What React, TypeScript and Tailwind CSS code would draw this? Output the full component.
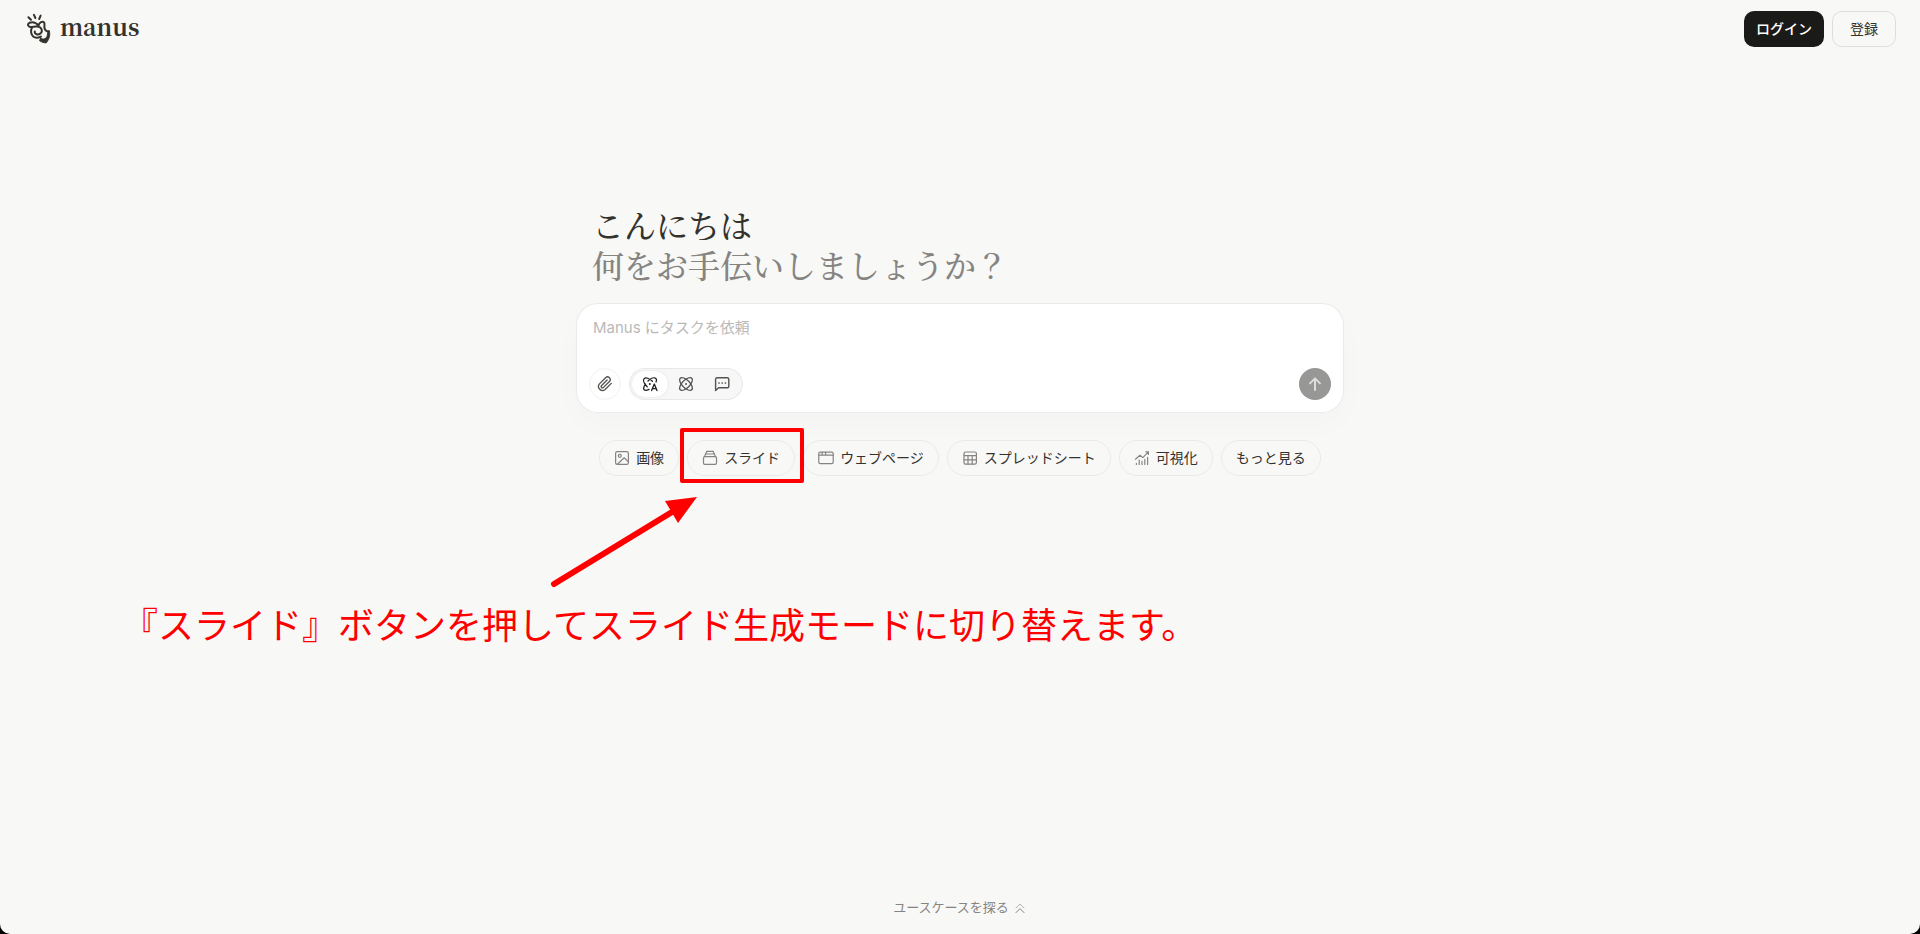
import type { ReactNode } from 'react'

export default function App() {
  return (
    <div className="min-h-screen bg-black font-['Inter','Noto_Sans_CJK_JP',sans-serif]">
      <div className="flex min-h-screen flex-col rounded-b-[10px] bg-[#f8f8f7] text-[#34322d]">
        <Header />

        <main className="flex grow flex-col pt-[146px]">
          <div className="mx-auto w-full max-w-[768px]">
            <h1 className="px-4 font-['Noto_Serif_CJK_JP','Noto_Sans_CJK_JP',serif] text-[32px] leading-10 font-medium">
              <span className="block">こんにちは</span>
              <span className="block text-[#858481]">何をお手伝いしましょうか？</span>
            </h1>
            <PromptBox />
            <Suggestions />
          </div>

          <p className="mt-[121px] pl-[122px] font-['Noto_Sans_CJK_JP',sans-serif] text-[36px] leading-[52px] text-[#ff0000]">
            『スライド』ボタンを押してスライド生成モードに切り替えます。
          </p>
        </main>

        <footer className="flex justify-center pb-[14px]">
          <button type="button" className="flex h-6 items-center gap-1 text-[13px] text-[#858481]">
            ユースケースを探る
            <ChevronsUpIcon />
          </button>
        </footer>
      </div>
    </div>
  )
}

function Header() {
  return (
    <header className="flex h-[58px] items-center justify-between px-6">
      <a href="#" className="flex items-center gap-2 text-[#34322d]">
        <LogoIcon />
        <span className="pb-1 font-['Noto_Serif_CJK_JP','Liberation_Serif',serif] text-[23px] leading-7 font-bold">
          manus
        </span>
      </a>
      <nav className="flex items-center gap-2 text-sm">
        <button type="button" className="h-9 rounded-[10px] bg-[#1a1a19] px-3 font-medium text-white">
          ログイン
        </button>
        <button type="button" className="h-9 w-16 rounded-[10px] border border-black/10">
          登録
        </button>
      </nav>
    </header>
  )
}

function PromptBox() {
  return (
    <form className="mt-[19px] rounded-[22px] border border-black/8 bg-white shadow-[0_12px_32px_rgba(0,0,0,0.02)]">
      <textarea
        aria-label="Manus にタスクを依頼"
        placeholder="Manus にタスクを依頼"
        rows={1}
        className="block h-[52px] w-full resize-none bg-transparent px-4 pt-3 text-[15px] leading-6 outline-none placeholder:text-[#b9b9b7]"
      />
      <div className="flex items-center gap-2 px-3 pt-3 pb-3">
        <button
          type="button"
          aria-label="ファイルを添付"
          className="flex size-8 items-center justify-center rounded-full border border-black/6 text-[#535350]"
        >
          <PaperclipIcon />
        </button>
        <div className="flex h-8 items-center rounded-full border border-black/6 bg-[#f7f7f7] px-0.5 text-[#535350]">
          <ModeButton label="アダプティブ" active>
            <AdaptiveIcon />
          </ModeButton>
          <ModeButton label="エージェント">
            <AgentIcon />
          </ModeButton>
          <ModeButton label="チャット">
            <ChatIcon />
          </ModeButton>
        </div>
        <button
          type="submit"
          aria-label="送信"
          className="ml-auto flex size-8 items-center justify-center rounded-full bg-[#979796] text-[#dededd]"
        >
          <ArrowUpIcon />
        </button>
      </div>
    </form>
  )
}

function ModeButton({ label, active, children }: { label: string; active?: boolean; children: ReactNode }) {
  return (
    <button
      type="button"
      aria-label={label}
      aria-pressed={!!active}
      className="flex h-[26px] w-9 items-center justify-center rounded-full aria-pressed:bg-white aria-pressed:text-[#1f1f1e] aria-pressed:shadow-[0_0_2px_rgba(0,0,0,0.12)]"
    >
      {children}
    </button>
  )
}

function Suggestions() {
  return (
    <div className="mt-[27px] flex justify-center gap-2">
      <Chip icon={<ImageIcon />}>画像</Chip>
      <div className="relative">
        <Chip icon={<SlidesIcon />}>スライド</Chip>
        <div className="pointer-events-none absolute -top-3 -right-[9px] -bottom-[7px] -left-[7px] rounded-xs border-4 border-[#ff0000]" />
        <PointerArrow />
      </div>
      <Chip icon={<WebpageIcon />}>ウェブページ</Chip>
      <Chip icon={<SheetIcon />}>スプレッドシート</Chip>
      <Chip icon={<ChartIcon />}>可視化</Chip>
      <Chip>もっと見る</Chip>
    </div>
  )
}

function Chip({ icon, children }: { icon?: ReactNode; children: ReactNode }) {
  return (
    <button
      type="button"
      className="flex h-9 items-center gap-1.5 rounded-full border border-black/6 px-3.5 text-sm whitespace-nowrap"
    >
      {icon}
      {children}
    </button>
  )
}

function PointerArrow() {
  return (
    <svg
      className="pointer-events-none absolute top-[52px] -left-[140px]"
      width="152"
      height="100"
      viewBox="0 0 152 100"
      fill="#ff0000"
      aria-hidden="true"
    >
      <path d="M7 92 130 17" stroke="#ff0000" strokeWidth="6" strokeLinecap="round" />
      <path d="M150 5 118 9 131 31Z" />
    </svg>
  )
}

function LogoIcon() {
  return (
    <svg width="28" height="32" viewBox="0 0 28 32" fill="none" stroke="currentColor" strokeWidth="2" strokeLinecap="round" strokeLinejoin="round" aria-hidden="true">
      <path d="M4.4 4.2 7 6.8M9.9 1.8 11.4 5M16.6 2.6 15.2 6" />
      <path d="M14.5 12.4C12 9.6 8.5 8.6 5.5 9.8 3 11 4 13.8 6.5 14 9 14.2 11 13 13.8 13.6 18 14.4 19 18 16.6 20.4 14 22.4 10.4 21.4 10.8 18.4" />
      <path d="M14.5 12.2C15.5 9.4 18.5 7.8 20 9.4 21.2 10.8 20 13 20.5 15 21 17.4 23 18.8 24.6 18.2" />
      <path d="M8 14.4C6.4 17.2 6.8 22 9.4 23.8 11.5 25.2 15 24.6 17 23.6" />
      <path d="M25.4 18.2C26.4 22 25.4 25.5 22.4 29.8 20 30 18 29.2 15.6 27.8L16.6 25C19 27 21.5 26.2 23 23.6 23.8 21.8 23.4 20 24 18.4Z" fill="currentColor" strokeWidth="1" />
    </svg>
  )
}

function PaperclipIcon() {
  return (
    <svg width="16" height="16" viewBox="0 0 24 24" fill="none" stroke="currentColor" strokeWidth="2" strokeLinecap="round" strokeLinejoin="round" aria-hidden="true">
      <path d="m21.4 11.1-9.2 9.1a6 6 0 0 1-8.5-8.4l9.2-9.2a4 4 0 0 1 5.7 5.7l-9.2 9.1a2 2 0 0 1-2.8-2.8l8.5-8.5" />
    </svg>
  )
}

function AdaptiveIcon() {
  return (
    <svg width="16" height="16" viewBox="0 0 16 16" fill="none" stroke="currentColor" strokeWidth="1.3" strokeLinecap="round" strokeLinejoin="round" aria-hidden="true">
      <path d="M5.2 10.8C2.2 7.8.8 4.2 2.2 2.6 3.6 1.2 7.4 2.2 10.4 5.2M6 5C8.8 2.2 12.2 1 13.8 2.4 14.6 3.2 14.6 4.6 14 6M3.4 8C1.6 10.6 1.2 12.8 2.2 13.8 3.2 14.8 5 14.4 7 13.4" />
      <path d="m9.6 14.6 2.7-6.6 2.7 6.6M10.6 12.6H14" />
      <circle cx="7.8" cy="8" r="1" fill="currentColor" stroke="none" />
    </svg>
  )
}

function AgentIcon() {
  return (
    <svg width="16" height="16" viewBox="0 0 16 16" fill="none" stroke="currentColor" strokeWidth="1.3" aria-hidden="true">
      <ellipse cx="8" cy="8" rx="8.2" ry="3.8" transform="rotate(45 8 8)" />
      <ellipse cx="8" cy="8" rx="8.2" ry="3.8" transform="rotate(-45 8 8)" />
      <circle cx="8" cy="8" r="1" fill="currentColor" stroke="none" />
    </svg>
  )
}

function ChatIcon() {
  return (
    <svg width="16" height="16" viewBox="0 0 16 16" fill="none" stroke="currentColor" strokeWidth="1.4" strokeLinecap="round" strokeLinejoin="round" aria-hidden="true">
      <path d="M3 1.8h10.4a1.4 1.4 0 0 1 1.4 1.4v7.2a1.4 1.4 0 0 1-1.4 1.4H4.6l-3 2.8V3.2A1.4 1.4 0 0 1 3 1.8Z" />
      <path d="M5 7h.01M8.2 7h.01M11.4 7h.01" strokeWidth="1.7" />
    </svg>
  )
}

function ArrowUpIcon() {
  return (
    <svg width="16" height="16" viewBox="0 0 16 16" fill="none" stroke="currentColor" strokeWidth="2" strokeLinecap="round" strokeLinejoin="round" aria-hidden="true">
      <path d="M8 14V3M3 7.4l5-5 5 5" />
    </svg>
  )
}

function ImageIcon() {
  return (
    <svg width="16" height="16" viewBox="0 0 16 16" fill="none" stroke="#858481" strokeWidth="1.2" strokeLinecap="round" strokeLinejoin="round" aria-hidden="true">
      <rect x="1.6" y="1.6" width="12.8" height="12.8" rx="1.6" />
      <circle cx="5.8" cy="5.8" r="1.5" />
      <path d="m3.4 14.2 6.8-6.4 4 3.8" />
    </svg>
  )
}

function SlidesIcon() {
  return (
    <svg width="16" height="16" viewBox="0 0 16 16" fill="none" stroke="#858481" strokeWidth="1.2" strokeLinecap="round" strokeLinejoin="round" aria-hidden="true">
      <path d="M5 1.4h6M3.6 4h8.8M2.8 6.6h10.4c.8 0 1.3.6 1.3 1.3v5.2c0 .8-.6 1.3-1.3 1.3H2.8c-.7 0-1.3-.5-1.3-1.3V7.9c0-.7.6-1.3 1.3-1.3Z" />
      <path d="M5 1.4 3.6 4 2.6 6.6M11 1.4 12.4 4l1 2.6" />
    </svg>
  )
}

function WebpageIcon() {
  return (
    <svg width="16" height="16" viewBox="0 0 16 16" fill="none" stroke="#858481" strokeWidth="1.2" strokeLinecap="round" strokeLinejoin="round" aria-hidden="true">
      <rect x=".8" y="2.2" width="14.4" height="11.4" rx="1.4" />
      <path d="M.8 5.2h14.4M4.2 2.4v2.6M7.6 2.4v2.6" />
    </svg>
  )
}

function SheetIcon() {
  return (
    <svg width="16" height="16" viewBox="0 0 16 16" fill="none" stroke="#858481" strokeWidth="1.2" strokeLinecap="round" strokeLinejoin="round" aria-hidden="true">
      <rect x="2" y="2" width="12.4" height="12.2" rx="1.6" />
      <path d="M2 5.6h12.4M2 9.8h12.4M6 5.6v8.6M10.2 5.6v8.6" />
    </svg>
  )
}

function ChartIcon() {
  return (
    <svg width="16" height="16" viewBox="0 0 16 16" fill="none" stroke="#858481" strokeWidth="1.2" strokeLinecap="round" strokeLinejoin="round" aria-hidden="true">
      <path d="m1.4 9.2 4.6-4 2.8 2.4 5.6-5.8M11.8 1.8h2.6v2.6" />
      <path d="M2.4 13.4v1M5.2 10v4.4M8 11.4v3M10.8 9.4v5M13.6 7.4v7" />
    </svg>
  )
}

function ChevronsUpIcon() {
  return (
    <svg width="14" height="14" viewBox="0 0 14 14" fill="none" stroke="currentColor" strokeLinecap="round" strokeLinejoin="round" aria-hidden="true">
      <path d="m3 7 4-4 4 4" strokeOpacity=".6" />
      <path d="m3 11.6 4-4 4 4" />
    </svg>
  )
}
